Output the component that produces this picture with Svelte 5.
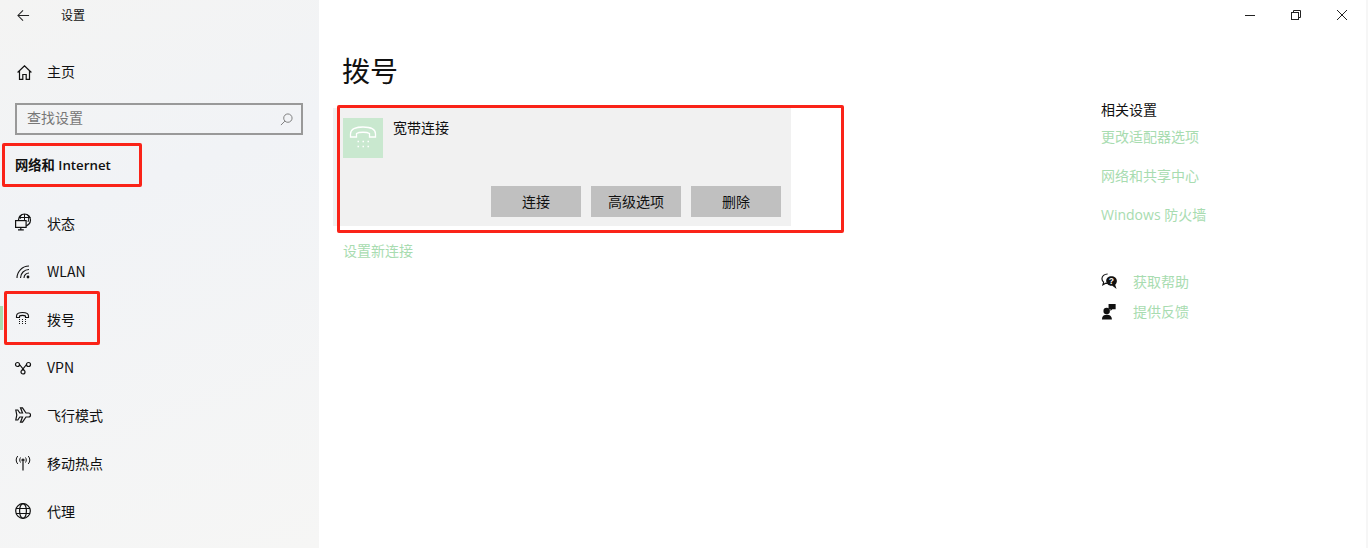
<script>
  const navItems = [
    { label: "状态", icon: "status" },
    { label: "WLAN", icon: "wlan" },
    { label: "拨号", icon: "dial", active: true },
    { label: "VPN", icon: "vpn" },
    { label: "飞行模式", icon: "plane" },
    { label: "移动热点", icon: "hotspot" },
    { label: "代理", icon: "globe" }
  ];
  const relatedLinks = ["更改适配器选项", "网络和共享中心", "Windows 防火墙"];
</script>

{#snippet navIcon(name)}
  <svg class="nav-icon" viewBox="0 0 16 16" fill="none" stroke="#111" stroke-width="1.2">
    {#if name === "status"}
      <circle cx="9.5" cy="5" r="6" />
      <path d="M9.500 -1V5M6.500 -0.500C5.500 1 5.200 2.500 5.200 4M12.500 -0.500C14 1.500 14 4 13 7M4 2.500H15.500" stroke-width="1" />
      <rect x="0.600" y="5.600" width="10.500" height="6.800" fill="#f4f4f4" />
      <path d="M5.800 12.500V14.800M3 14.800H8.800" />
    {:else if name === "wlan"}
      <path d="M2 15A12 12 0 0 1 14 3M5.500 15A8.500 8.500 0 0 1 14 6.500M9 15A5 5 0 0 1 14 10" stroke-width="1.1" />
      <circle cx="13" cy="14" r="1.400" fill="#111" stroke="none" />
    {:else if name === "dial"}
      <path d="M1.500 6.500V5C1.500 2.500 4.500 1.500 7.500 1.500S13.500 2.500 13.500 5V6.500H10.500V5C9.500 4.200 5.500 4.200 4.500 5V6.500Z" stroke-width="1.1" />
      <path d="M4 8.500h1M7 8.500h1M10 8.500h1M4 10.500h1M7 10.500h1M10 10.500h1M4 12.500h1M7 12.500h1M10 12.500h1" stroke-width="1" />
    {:else if name === "vpn"}
      <circle cx="2.500" cy="5.500" r="2" />
      <circle cx="13.500" cy="5.500" r="2" />
      <circle cx="8" cy="13" r="2" />
      <path d="M4.500 5.500L9 11.200M11.500 5.500L7 11.200" />
    {:else if name === "plane"}
      <path d="M0.800 3H2.800L4.800 6H7.500L5.500 0.800H7.500L11 6H13.500C15 6 15.500 7.500 15.500 8S15 10 13.500 10H11L7.500 15.200H5.500L7.500 10H4.800L2.800 13H0.800L1.800 8Z" />
    {:else if name === "hotspot"}
      <path d="M8 6.500V15.500" stroke-width="1.200" />
      <circle cx="8" cy="5" r="1" />
      <path d="M5.500 2.500C4.500 4 4.500 6 5.500 7.500M10.500 2.500C11.500 4 11.500 6 10.500 7.500M2.800 1C0.700 3.500 0.700 6.500 2.800 9M13.200 1C15.300 3.500 15.300 6.500 13.200 9" stroke-width="1" />
    {:else}
      <circle cx="8" cy="8" r="7.300" />
      <ellipse cx="8" cy="8" rx="3.400" ry="7.300" />
      <path d="M1 5.500H15M1 10.500H15" />
    {/if}
  </svg>
{/snippet}

<div class="window">
  <aside class="sidebar">
    <div class="title-row">
      <svg class="back" viewBox="0 0 14 14" fill="none" stroke="#222" stroke-width="1.100">
        <path d="M13 7H1M6.500 1.500L1 7L6.500 12.500" />
      </svg>
      <span>设置</span>
    </div>

    <div class="home-row">
      <svg class="home-icon" viewBox="0 0 15 15" fill="none" stroke="#111" stroke-width="1.200">
        <path d="M0.600 7.500L7.500 0.800L14.400 7.500M2.500 5.800V14.400H5.800V9.500H9.200V14.400H12.500V5.800" />
      </svg>
      <span>主页</span>
    </div>

    <div class="search">
      <span>查找设置</span>
      <svg viewBox="0 0 14 14" fill="none" stroke="#777" stroke-width="1">
        <circle cx="8.500" cy="5.500" r="4.500" />
        <path d="M5.200 8.800L1 13" />
      </svg>
    </div>

    <div class="section-title">网络和 Internet</div>

    <nav>
      {#each navItems as item}
        <div class="nav-item">
          {#if item.active}<span class="marker"></span>{/if}
          {@render navIcon(item.icon)}
          <span>{item.label}</span>
        </div>
      {/each}
    </nav>
  </aside>

  <main class="content">
    <div class="window-controls">
      <svg viewBox="0 0 46 30" fill="none" stroke="#222" stroke-width="1">
        <path d="M18 15.500H28" />
      </svg>
      <svg viewBox="0 0 46 30" fill="none" stroke="#222" stroke-width="1">
        <rect x="18.500" y="12.500" width="7" height="7" />
        <path d="M20.500 12.500V10.500H27.500V17.500H25.500" />
      </svg>
      <svg viewBox="0 0 46 30" fill="none" stroke="#222" stroke-width="1">
        <path d="M18 10L28 20M28 10L18 20" />
      </svg>
    </div>

    <div class="columns">
      <section class="main-col">
        <h1>拨号</h1>
        <div class="card">
          <div class="card-top">
            <div class="card-icon">
              <svg viewBox="0 0 28 28" fill="none" stroke="#fff" stroke-width="1.300">
                <path d="M1.500 13V10C1.500 4.500 8 3 14 3S26.500 4.500 26.500 10V13H20.500V9.500C18 7.800 10 7.800 7.500 9.500V13Z" />
                <path d="M8.500 17.500H10M13.500 17.500H15M18.500 17.500H20M8.500 22.500H10M13.500 22.500H15M18.500 22.500H20" />
              </svg>
            </div>
            <span>宽带连接</span>
          </div>
          <div class="card-actions">
            <button>连接</button>
            <button>高级选项</button>
            <button>删除</button>
          </div>
        </div>
        <div class="new-link">设置新连接</div>
      </section>

      <section class="side-col">
        <div class="side-title">相关设置</div>
        <div class="side-links">
          {#each relatedLinks as link}
            <div>{link}</div>
          {/each}
        </div>
        <div class="help-rows">
          <div class="help-row">
            <svg viewBox="0 0 18 18">
              <path d="M7 1C3.500 1 1 3.200 1 6C1 7.500 1.700 8.700 2.800 9.600L2 12.500L5 10.800C5.500 11 6 11 6.500 11" fill="none" stroke="#111" stroke-width="1.200" />
              <path d="M11 3.500C7.800 3.500 5.500 5.700 5.500 8.500S7.800 13.500 11 13.500H12L16.500 17L15 12.500C16.200 11.500 16.800 10 16.800 8.500C16.800 5.700 14.200 3.500 11 3.500Z" fill="#111" />
              <text x="11" y="12" class="q">?</text>
            </svg>
            <span>获取帮助</span>
          </div>
          <div class="help-row">
            <svg viewBox="0 0 18 18" fill="#111">
              <circle cx="6" cy="8.500" r="3.400" />
              <path d="M1 17.500C1 14 3 12.500 6 12.500S11.500 14 11.500 17.500Z" />
              <path d="M8 1H15.500V6.500H12L10 8.500V6.500H8Z" />
            </svg>
            <span>提供反馈</span>
          </div>
        </div>
      </section>
    </div>
  </main>

  <div class="note note-section"></div>
  <div class="note note-dial"></div>
  <div class="note note-card"></div>
</div>

<style>
  :global(body) {
    margin: 0;
    background: #fff;
  }

  .window {
    position: relative;
    display: flex;
    width: 1368px;
    height: 548px;
    overflow: hidden;
    font-family: "Noto Sans CJK SC", "Noto Sans", sans-serif;
    font-size: 14px;
    line-height: 20px;
    color: #111;
  }

  .sidebar {
    width: 319px;
    flex-shrink: 0;
    background: linear-gradient(160deg, #f4f4f3 0%, #f1f3f6 35%, #f6f6f5 100%);
  }

  .title-row {
    display: flex;
    align-items: center;
    height: 30px;
    padding-left: 17px;
    font-size: 12px;
  }

  .back {
    width: 13px;
    height: 13px;
    margin-right: 31px;
  }

  .home-row {
    display: flex;
    align-items: center;
    height: 24px;
    margin-top: 29px;
    padding-left: 17px;
  }

  .home-icon {
    width: 15px;
    height: 15px;
    margin: 2px 15px 0 0;
  }

  .nav-icon {
    width: 16px;
    height: 16px;
    margin-right: 16px;
    flex-shrink: 0;
    overflow: visible;
  }

  .search {
    display: flex;
    align-items: center;
    justify-content: space-between;
    box-sizing: border-box;
    width: 288px;
    height: 32px;
    margin: 20px 0 0 15px;
    padding: 0 8px 5px 10px;
    border: 2px solid #999;
    color: #777;
  }

  .search svg {
    width: 13px;
    height: 13px;
    margin-top: 5px;
  }

  .section-title {
    margin: 19px 0 0 15px;
    height: 22px;
    line-height: 22px;
    font-size: 13.3px;
    font-weight: 600;
    font-family: "Open Sans", "Noto Sans CJK SC", sans-serif;
  }

  nav {
    margin-top: 23px;
  }

  .nav-item {
    position: relative;
    display: flex;
    align-items: center;
    height: 48px;
    padding-left: 15px;
  }

  .marker {
    position: absolute;
    left: 0;
    top: 11px;
    width: 3px;
    height: 24px;
    background: #a8dcb0;
  }

  .content {
    flex: 1;
    min-width: 0;
    display: flex;
    flex-direction: column;
    background: #fff;
    border-right: 2px solid #f6f6f6;
  }

  .window-controls {
    display: flex;
    justify-content: flex-end;
    height: 30px;
    padding-right: 1px;
  }

  .window-controls svg {
    width: 46px;
    height: 30px;
  }

  .columns {
    display: flex;
  }

  .main-col {
    width: 768px;
    padding-left: 14px;
  }

  h1 {
    margin: 18px 0 0 9px;
    height: 44px;
    line-height: 44px;
    font-size: 28px;
    font-weight: 400;
  }

  .card {
    box-sizing: border-box;
    width: 458px;
    height: 118px;
    margin-top: 16px;
    padding: 10px;
    background: #f1f1f1;
  }

  .card-top {
    display: flex;
    gap: 10px;
    height: 68px;
  }

  .card-top span {
    margin-top: -1px;
  }

  .card-icon {
    display: flex;
    align-items: center;
    justify-content: center;
    width: 40px;
    height: 40px;
    background: #c9e8cf;
  }

  .card-icon svg {
    width: 28px;
    height: 28px;
  }

  .card-actions {
    display: flex;
    justify-content: flex-end;
    gap: 10px;
  }

  button {
    width: 90px;
    height: 31px;
    padding: 0 0 2px;
    border: 0;
    background: #c0c0c0;
    color: #111;
    font: inherit;
  }

  .new-link {
    margin: 13px 0 0 10px;
    height: 22px;
    line-height: 22px;
    color: #a8dcb0;
  }

  .side-col {
    flex: 1;
  }

  .side-title {
    margin-top: 69px;
    height: 20px;
  }

  .side-links {
    display: flex;
    flex-direction: column;
    gap: 19px;
    margin-top: 8px;
    color: #a8dcb0;
    font-family: "Open Sans", "Noto Sans CJK SC", sans-serif;
  }

  .help-rows {
    display: flex;
    flex-direction: column;
    gap: 10px;
    margin-top: 46px;
    color: #a8dcb0;
  }

  .help-row {
    display: flex;
    align-items: center;
    gap: 15px;
    height: 20px;
  }

  .help-row svg {
    width: 17px;
    height: 17px;
  }

  .q {
    fill: #fff;
    font-size: 9px;
    font-weight: 700;
    text-anchor: middle;
    font-family: "Liberation Sans", sans-serif;
  }

  .note {
    position: absolute;
    box-sizing: border-box;
    border: 3px solid #fa2318;
    border-radius: 2px;
  }

  .note-section {
    left: 2px;
    top: 143px;
    width: 140px;
    height: 44px;
  }

  .note-dial {
    left: 4px;
    top: 291px;
    width: 96px;
    height: 54px;
  }

  .note-card {
    left: 337px;
    top: 105px;
    width: 507px;
    height: 128px;
  }
</style>
